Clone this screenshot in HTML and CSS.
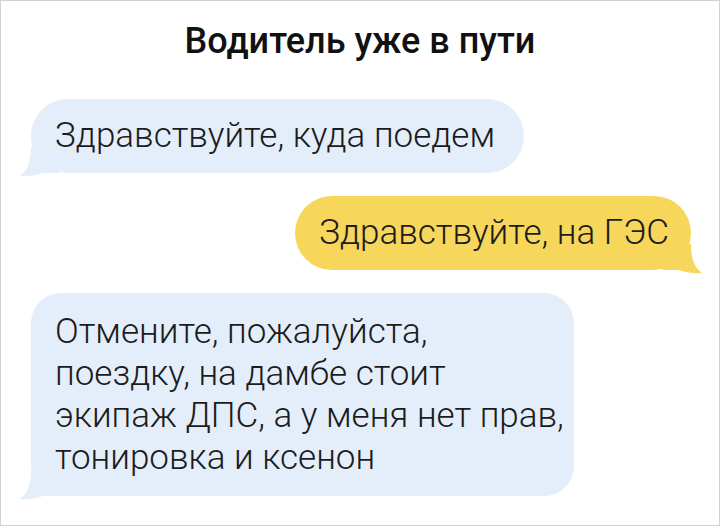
FILE: index.html
```html
<!DOCTYPE html>
<html lang="ru">
<head>
    <meta charset="UTF-8">
    <meta name="viewport" content="width=device-width, initial-scale=1.0">
    <title>Водитель уже в пути</title>
    <link rel="stylesheet" href="styles.css">
</head>
<body>
    <div class="frame">
        <h1 class="title">Водитель уже в пути</h1>

        <div class="chat">
            <div class="bubble bubble-in bubble-first">
                Здравствуйте, куда поедем
                <svg class="tail" width="40" height="30" viewBox="0 0 40 30"><path d="M12 0 L40 0 L40 26 L24 26 C18 28 10 30 1 29 C8 24 12 16 12 0 Z"/></svg>
            </div>

            <div class="bubble bubble-out">
                Здравствуйте, на ГЭС
                <svg class="tail" width="40" height="30" viewBox="0 0 40 30"><path d="M12 0 L40 0 L40 26 L24 26 C18 28 10 30 1 29 C8 24 12 16 12 0 Z"/></svg>
            </div>

            <div class="bubble bubble-in bubble-long">
                Отмените, пожалуйста,<br>
                поездку, на дамбе стоит<br>
                экипаж ДПС, а у меня нет прав,<br>
                тонировка и ксенон
                <svg class="tail" width="40" height="30" viewBox="0 0 40 30"><path d="M12 0 L40 0 L40 26 L24 26 C18 28 10 30 1 29 C8 24 12 16 12 0 Z"/></svg>
            </div>
        </div>
    </div>
</body>
</html>
```

FILE: styles.css
```css
/* Chat screenshot */
body {
    margin: 0;
    padding: 0;
    background-color: #fff;
    font-family: Roboto, "Liberation Sans", sans-serif;
    color: #1c1c1c;
}

.frame {
    box-sizing: border-box;
    width: 720px;
    height: 526px;
    border: 1px solid #d2d2d2;
    padding-top: 19px;
}

.title {
    margin: 0;
    font-size: 36px;
    font-weight: 500;
    line-height: 42px;
    text-align: center;
    color: #111;
}

.chat {
    display: flex;
    flex-direction: column;
    align-items: flex-start;
    gap: 23px;
    padding: 0 28px 0 30px;
    margin-top: 37px;
}

.bubble {
    position: relative;
    padding: 16px 22px 16px 24px;
    border-radius: 37px;
    font-size: 35px;
    font-weight: 300;
    line-height: 42px;
    white-space: nowrap;
}

.bubble-first {
    padding-right: 29px;
}

.bubble-long {
    padding: 18px 10px 17px 24px;
    border-radius: 30px;
}

.bubble-in {
    background-color: #e4eefa;
}

.bubble-in .tail {
    fill: #e4eefa;
}

.bubble-out {
    align-self: flex-end;
    background-color: #f6d65b;
}

.bubble-out .tail {
    fill: #f6d65b;
}

.tail {
    position: absolute;
    bottom: -4px;
    left: -12px;
}

.bubble-out .tail {
    left: auto;
    right: -12px;
    transform: scaleX(-1);
}
```
